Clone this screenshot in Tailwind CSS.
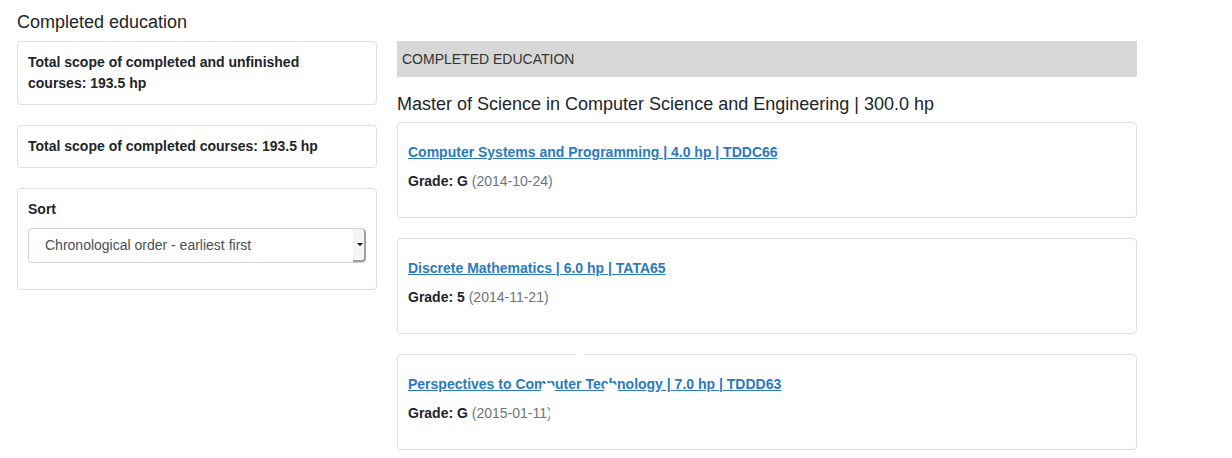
<!DOCTYPE html>
<html lang="en">
<head>
<meta charset="utf-8">
<meta name="viewport" content="width=device-width, initial-scale=1">
<title>Completed education</title>
<script src="https://cdn.jsdelivr.net/npm/@tailwindcss/browser@4"></script>
</head>
<body class="bg-white font-['Liberation_Sans',Arial,sans-serif] text-sm leading-[21px] text-[#212529]">
<main class="ml-[7px] max-w-[1140px] pt-3 pb-2">
  <h1 class="px-[10px] text-lg leading-5">Completed education</h1>
  <div class="mt-[9px] flex items-start">
    <aside class="flex w-1/3 flex-col gap-5 px-[10px]">
      <section class="rounded border border-[#dfdfdf] py-[10px] pr-6 pl-[10px] font-bold">Total scope of completed and unfinished courses: 193.5 hp</section>
      <section class="rounded border border-[#dfdfdf] py-[10px] pr-6 pl-[10px] font-bold">Total scope of completed courses: 193.5 hp</section>
      <section class="rounded border border-[#dfdfdf] px-[10px] pt-[10px] pb-[26px]">
        <label for="sort" class="block font-bold">Sort</label>
        <div class="relative mt-2">
          <select id="sort" class="block h-[35px] w-full appearance-none rounded border border-[#ced4da] bg-white pr-5 pb-0.5 pl-4 text-sm text-[#495057]">
            <option>Chronological order - earliest first</option>
          </select>
          <span class="pointer-events-none absolute top-px right-0 bottom-px flex w-[13px] items-center justify-end rounded-r border-r-2 border-b-2 border-[#a0a0a0] bg-[#f4f5f7] pr-px">
            <svg class="h-[3px] w-[6px]" viewBox="0 0 6 3" aria-hidden="true"><path d="M0 0h6L3 3z" fill="#000"/></svg>
          </span>
        </div>
      </section>
    </aside>
    <div class="w-2/3 px-[10px]">
      <h2 class="bg-[#d7d7d7] px-[5px] py-2 leading-5 text-[#333]">COMPLETED EDUCATION</h2>
      <h3 class="mt-[17px] text-lg leading-5">Master of Science in Computer Science and Engineering | 300.0 hp</h3>
      <div class="mt-2 flex flex-col gap-5">
        <article class="rounded border border-[#dfdfdf] px-[10px] pt-[19px] pb-[25px]">
          <a href="#tddc66" class="block w-fit font-bold text-[#2a7abf] underline">Computer Systems and Programming | 4.0 hp | TDDC66</a>
          <p class="mt-2"><b>Grade: G</b> <span class="text-[#6c757d]">(2014-10-24)</span></p>
        </article>
        <article class="rounded border border-[#dfdfdf] px-[10px] pt-[19px] pb-[25px]">
          <a href="#tata65" class="block w-fit font-bold text-[#2a7abf] underline">Discrete Mathematics | 6.0 hp | TATA65</a>
          <p class="mt-2"><b>Grade: 5</b> <span class="text-[#6c757d]">(2014-11-21)</span></p>
        </article>
        <article class="relative rounded border border-[#dfdfdf] px-[10px] pt-[19px] pb-[25px]">
          <a href="#tddd63" class="block w-fit font-bold text-[#2a7abf] underline">Perspectives to Computer Technology | 7.0 hp | TDDD63</a>
          <p class="mt-2"><b>Grade: G</b> <span class="text-[#6c757d]">(2015-01-11)</span></p>
          <!-- White ring of dots over the card -->
          <svg class="pointer-events-none absolute -top-px -left-px h-24 w-60" viewBox="0 0 240 96" fill="#fff" aria-hidden="true">
            <circle cx="183" cy="-5" r="7"/><circle cx="151" cy="36" r="7"/><circle cx="214" cy="36" r="7"/><circle cx="159" cy="59" r="7"/>
          </svg>
        </article>
      </div>
    </div>
  </div>
</main>
</body>
</html>
